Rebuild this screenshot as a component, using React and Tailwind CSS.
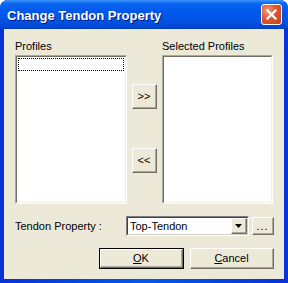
import React from "react";

const body = { fontFamily: '"Liberation Sans", Arial, sans-serif' };

// classic XP raised button
const Btn = ({ className = "", children, isDefault }) => (
  <div className={`${isDefault ? "border border-[#000000]" : ""} ${className}`}>
    <div className="w-full h-full border-t border-l border-t-white border-l-white border-r border-b border-r-[#716f64] border-b-[#716f64]">
      <div className="w-full h-full flex items-center justify-center bg-[#ece9d8] border-r border-b border-r-[#aca899] border-b-[#aca899] text-[11px] leading-[13px] text-black">
        {children}
      </div>
    </div>
  </div>
);

const ListBox = ({ className = "", children }) => (
  <div className={`border-t border-l border-t-[#aca899] border-l-[#aca899] border-r border-b border-r-white border-b-white ${className}`}>
    <div className="w-full h-full bg-white border-t border-l border-t-[#716f64] border-l-[#716f64] border-r border-b border-r-[#f1efe2] border-b-[#f1efe2]">
      {children}
    </div>
  </div>
);

export default function App() {
  return (
    <div className="w-[288px] h-[283px] bg-white">
      <div className="w-[288px] h-[283px] flex flex-col rounded-t-[8px] overflow-hidden bg-gradient-to-r from-[#0831d9] via-[#0058ee] to-[#0831d9]">
        {/* title bar */}
        <div className="h-[29px] shrink-0 flex items-center pl-[7px] pr-[6px] bg-[linear-gradient(to_bottom,#3d95ff_0%,#0a66f0_12%,#0058ea_40%,#0054e3_70%,#0049d4_92%,#003dbb_100%)]">
          <span
            className="flex-1 text-[13px] font-bold text-white leading-[15px] pt-[1px] [text-shadow:1px_1px_0_#0a1883]"
            style={body}
          >
            Change Tendon Property
          </span>
          <div className="w-[21px] h-[21px] rounded-[3px] border border-white flex items-center justify-center bg-[radial-gradient(circle_at_30%_30%,#f29a78_0%,#e0562c_45%,#c3401a_100%)]">
            <svg width="13" height="13" viewBox="0 0 13 13">
              <path d="M2.5 2.5 L10.5 10.5 M10.5 2.5 L2.5 10.5" stroke="#ffffff" strokeWidth="2.2" strokeLinecap="square" />
            </svg>
          </div>
        </div>

        {/* client area */}
        <div className="flex-1 mx-[4px] mb-[4px] bg-[#ece9d8] pt-[11px] pl-[11px] pr-[10px] flex flex-col" style={body}>
          <div className="flex text-[11px] leading-[13px] text-black">
            <span className="w-[147px]">Profiles</span>
            <span>Selected Profiles</span>
          </div>

          <div className="flex mt-[2px] h-[149px]">
            <ListBox className="w-[112px] h-full">
              <div className="mx-[1px] mt-[1px] h-[13px] border border-dotted border-black" />
            </ListBox>
            <div className="w-[35px] flex flex-col items-center pt-[29px]">
              <Btn className="w-[25px] h-[25px]">&gt;&gt;</Btn>
              <Btn className="w-[25px] h-[25px] mt-[39px]">&lt;&lt;</Btn>
            </div>
            <ListBox className="w-[111px] h-full" />
          </div>

          <div className="flex items-center mt-[12px] h-[20px]">
            <span className="w-[111px] text-[11px] leading-[13px] text-black pt-[1px]">Tendon Property :</span>
            <div className="w-[123px] h-[20px] border-t border-l border-t-[#7f7f7f] border-l-[#7f7f7f] border-r border-b border-r-white border-b-white">
              <div className="w-full h-full bg-white border-t border-l border-t-[#404040] border-l-[#404040] border-r border-b border-r-[#d4d0c8] border-b-[#d4d0c8] flex items-center">
                <span className="flex-1 pl-[2px] text-[11px] leading-[13px] text-black">Top-Tendon</span>
                <Btn className="w-[16px] h-[16px]">
                  <svg width="7" height="4" viewBox="0 0 7 4">
                    <path d="M0 0 H7 L3.5 4 Z" fill="#000000" />
                  </svg>
                </Btn>
              </div>
            </div>
            <Btn className="w-[22px] h-[18px] ml-[3px]">
              <span className="leading-[8px] tracking-[1px]">...</span>
            </Btn>
          </div>

          <div className="flex mt-[12px] pl-[84px]">
            <Btn isDefault className="w-[85px] h-[21px]">
              <span><u>O</u>K</span>
            </Btn>
            <Btn className="w-[84px] h-[21px] ml-[6px]">
              <span><u>C</u>ancel</span>
            </Btn>
          </div>
        </div>
      </div>
    </div>
  );
}
